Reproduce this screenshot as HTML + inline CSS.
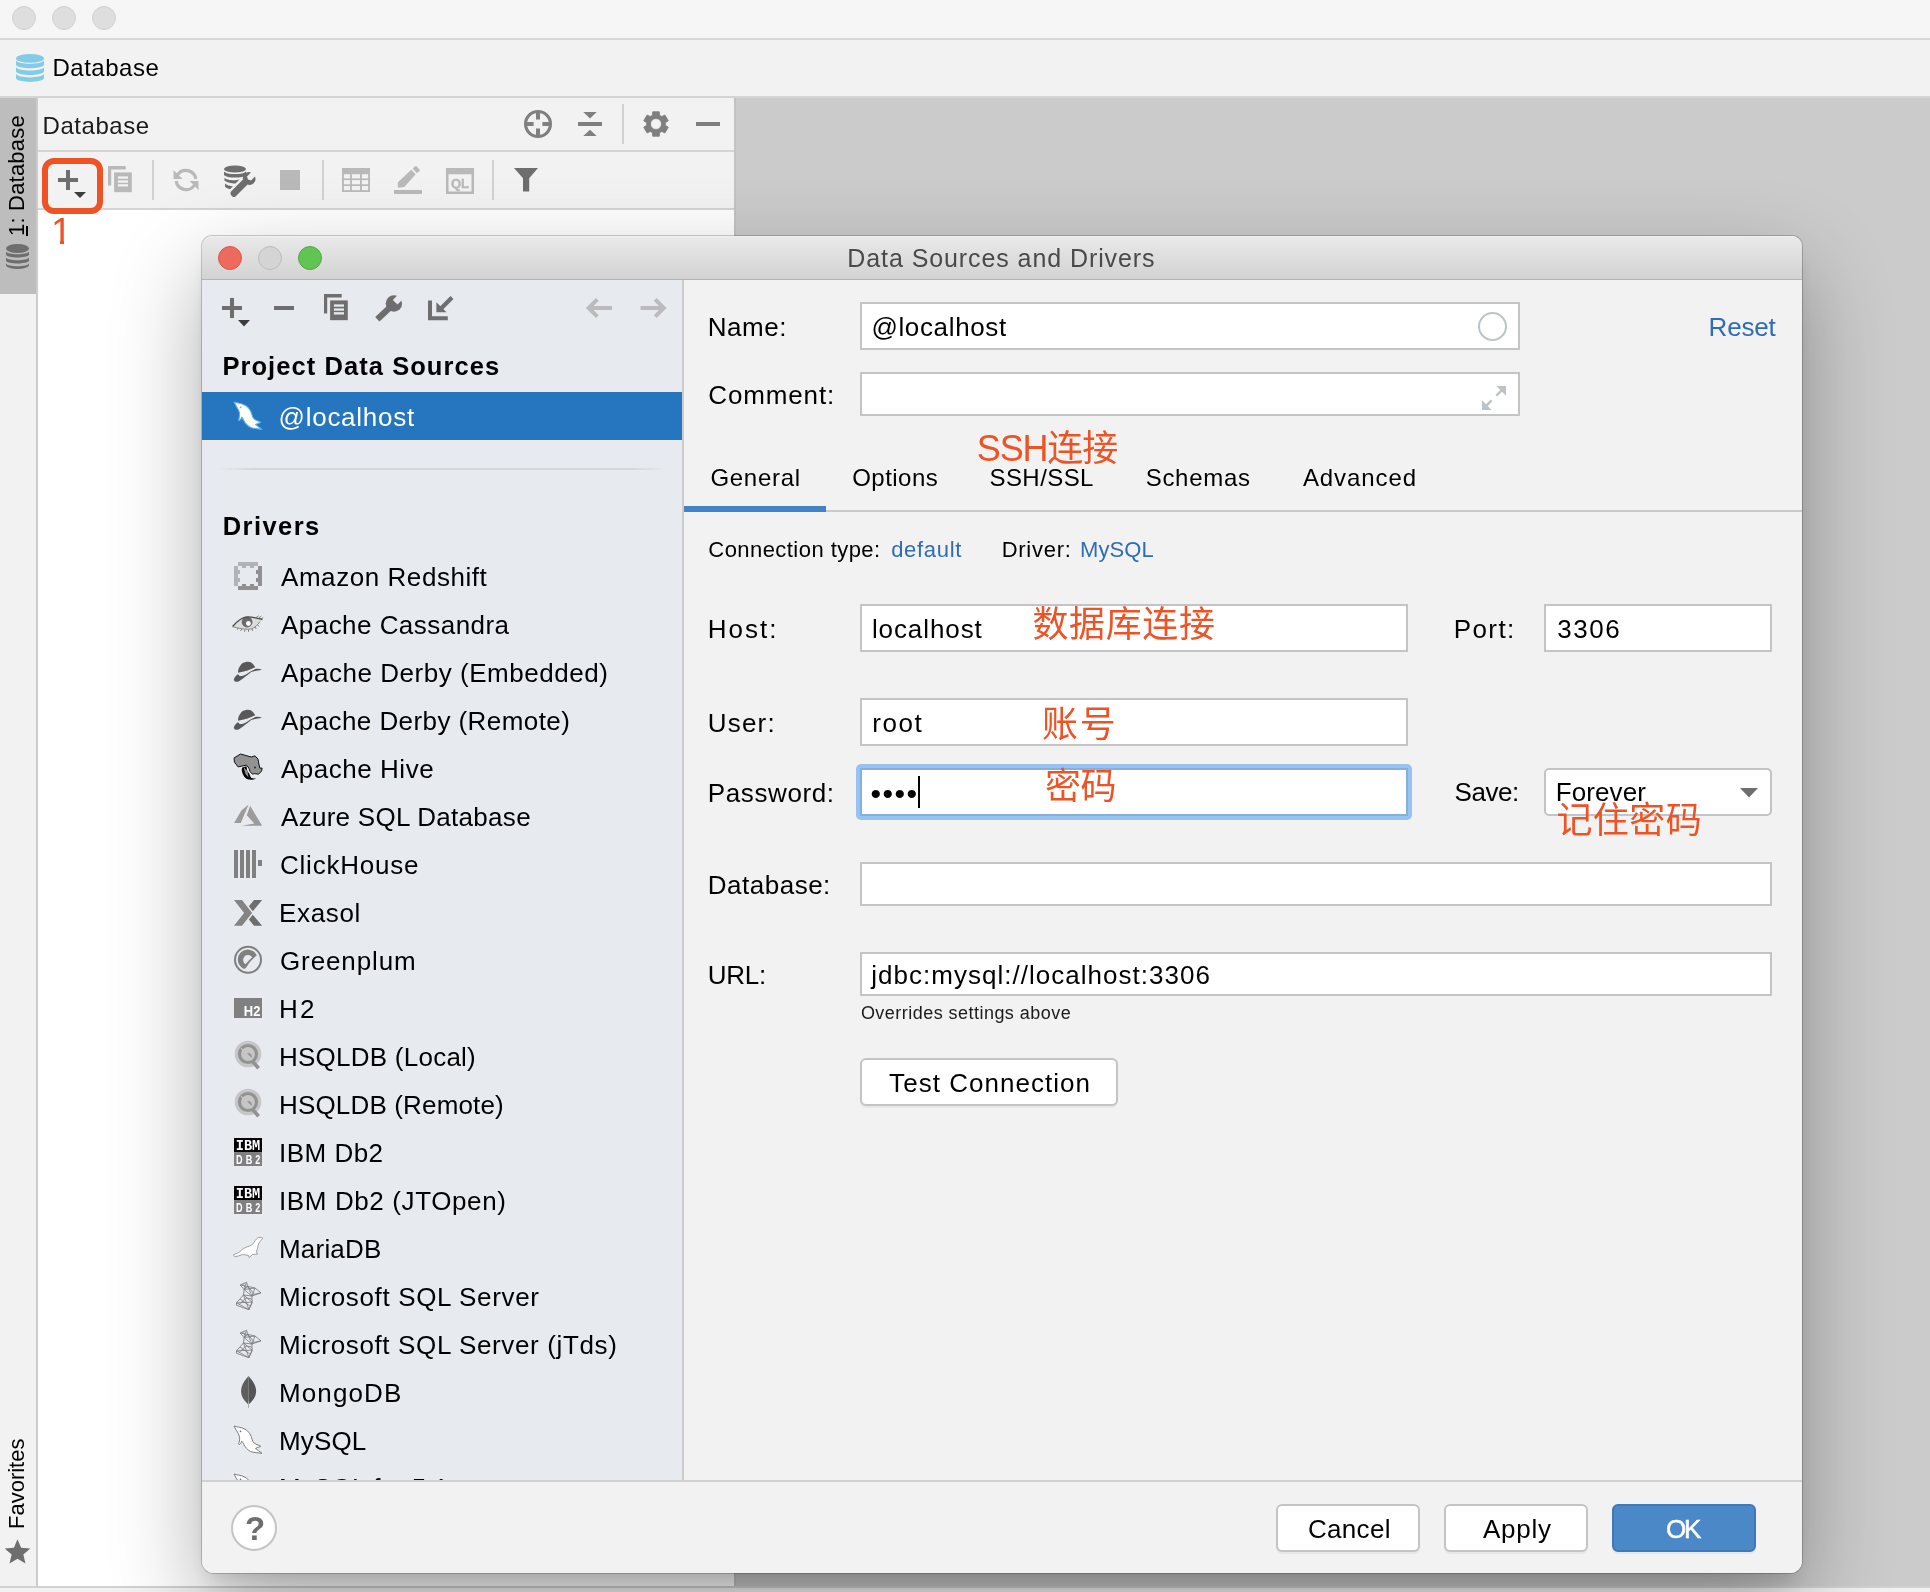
<!DOCTYPE html>
<html lang="zh">
<head>
<meta charset="utf-8">
<title>Data Sources and Drivers</title>
<style>
*{box-sizing:border-box;margin:0;padding:0}
html,body{width:1930px;height:1592px;overflow:hidden}
body{position:relative;background:#cbcbcb;font-family:"Liberation Sans","Noto Sans CJK SC",sans-serif;color:#000;font-size:26px;line-height:1}
#root{position:absolute;left:0;top:0;width:1930px;height:1592px;will-change:transform}
.a{position:absolute}
.t{position:absolute;white-space:pre;line-height:1;display:block}
svg{position:absolute;overflow:visible}
/* main window */
#titlebar{left:0;top:0;width:1930px;height:40px;background:#f6f6f6;border-bottom:2px solid #d7d7d7}
#titlebar i{position:absolute;top:6px;width:24px;height:24px;border-radius:50%;background:#dedede;border:1px solid #d2d2d2}
#navbar{left:0;top:40px;width:1930px;height:58px;background:#f2f2f2;border-bottom:2px solid #d4d4d4}
#stripe{left:0;top:98px;width:38px;height:1488px;background:#f2f2f2;border-right:2px solid #cbcbcb}
#stripebtn{left:0;top:98px;width:36px;height:196px;background:#bdbdbd}
#tw{left:38px;top:98px;width:696px;height:1488px;background:#fff}
#twhead{left:38px;top:98px;width:696px;height:54px;background:#f2f2f2;border-bottom:2px solid #d4d4d4}
#twbar{left:38px;top:152px;width:696px;height:58px;background:#f2f2f2;border-bottom:2px solid #d4d4d4}
#status{left:0;top:1586px;width:1930px;height:6px;background:#f2f2f2;border-top:2px solid #d1d1d1}
.vsep{position:absolute;width:2px;background:#d1d1d1}
/* dialog */
#dlg{left:202px;top:236px;width:1600px;height:1337px;border-radius:10px 10px 12px 12px;background:#f2f2f2;
  box-shadow:0 0 0 1px rgba(0,0,0,.2),0 36px 90px 0 rgba(0,0,0,.32),0 14px 20px -6px rgba(0,0,0,.12);overflow:hidden}
#dtitle{left:0;top:0;width:1600px;height:44px;background:linear-gradient(#f1f1f1 0,#e8e8e8 2px,#d3d3d3 100%);border-bottom:1px solid #b4b4b4}
#dtitle i{position:absolute;top:10px;width:24px;height:24px;border-radius:50%}
#side{left:0;top:44px;width:482px;height:1201px;background:#e7ebf0;border-right:2px solid #cdcdcd;overflow:hidden}
#sel{left:0;top:112px;width:480px;height:48px;background:#2675bf}
#foot{left:0;top:1244px;width:1600px;height:93px;border-top:2px solid #d1d1d1;background:#f2f2f2}
.inp{position:absolute;background:#fff;border:2px solid #c4c4c4}
.btn{position:absolute;background:#fff;border:2px solid #c4c4c4;border-radius:6px;box-shadow:0 2px 0 rgba(0,0,0,.045)}
</style>
</head>
<body>
<div id="root">
<!-- ===== main window chrome ===== -->
<div id="titlebar" class="a"><i style="left:12px"></i><i style="left:52px"></i><i style="left:92px"></i></div>
<div id="navbar" class="a"></div>
<div id="stripe" class="a"></div>
<div id="stripebtn" class="a"></div>
<div id="tw" class="a"></div>
<div id="twhead" class="a"></div>
<div id="twbar" class="a"></div>
<div class="a" style="left:734px;top:98px;width:2px;height:1488px;background:#c3c3c3"></div>
<div id="status" class="a"></div>
<!-- nav bar -->
<svg style="left:16px;top:54px" width="28" height="28" viewBox="0 0 28 28"><g fill="#84cbe8"><ellipse cx="14" cy="4.400" rx="14" ry="4.400"/><path d="M0 6.5C3 10.9 25 10.9 28 6.5v4.500C25 15.4 3 15.4 0 11.0z"/><path d="M0 13.3C3 17.7 25 17.7 28 13.3v4.500C25 22.2 3 22.2 0 17.8z"/><path d="M0 20.1C3 24.5 25 24.5 28 20.1v4.500C25 29.0 3 29.0 0 24.6z"/></g></svg>
<span class="t" style="left:52.40px;top:55.88px;font-size:24px;letter-spacing:0.530px;">Database</span>
<!-- left stripe -->
<span class="t" style="left:5.88px;top:236.40px;font-size:22px;transform-origin:0 0;transform:rotate(-90deg);letter-spacing:0.200px;">1: Database</span>
<div class="a" style="left:26px;top:226px;width:2px;height:10px;background:#000"></div>
<svg style="left:5.500px;top:244px" width="23" height="25" viewBox="0 0 23 25">
  <g fill="#6e6e6e"><ellipse cx="11.500" cy="4.500" rx="11.500" ry="4.500"/>
  <path d="M0 7.500c2 3.600 21 3.600 23 0v3.200c-2 3.600-21 3.600-23 0z"/>
  <path d="M0 13.500c2 3.600 21 3.600 23 0v3.200c-2 3.600-21 3.600-23 0z"/>
  <path d="M0 19.500c2 3.600 21 3.600 23 0v2c-2 4.600-21 4.600-23 0z"/></g>
</svg>
<span class="t" style="left:6.48px;top:1529.40px;font-size:22px;transform-origin:0 0;transform:rotate(-90deg);">Favorites</span>
<svg style="left:3.600px;top:1537.600px" width="27" height="27" viewBox="0 0 24 24"><path fill="#6e6e6e" d="M12 1l3.200 7.600 8.200.700-6.200 5.400 1.900 8-7.100-4.300-7.100 4.300 1.900-8L.600 9.300l8.200-.700z"/></svg>
<!-- tool window header -->
<span class="t" style="left:42.60px;top:113.68px;font-size:24px;letter-spacing:0.530px;color:#1a1a1a">Database</span>
<svg style="left:524px;top:110px" width="28" height="28" viewBox="0 0 28 28"><circle cx="14" cy="14" r="12.450" fill="none" stroke="#7f7f7f" stroke-width="3.100"/><path d="M14 2v7.600M14 18.400V26M2 14h7.600M18.400 14H26" stroke="#7f7f7f" stroke-width="4" fill="none"/></svg>
<svg style="left:578px;top:112px" width="24" height="24" viewBox="0 0 24 24"><g fill="#7f7f7f"><rect x="0" y="10" width="24" height="4"/><path d="M5.300 0h13.400l-6.700 6.500zM5.300 24h13.400l-6.700-6.300z"/></g></svg>
<div class="vsep" style="left:622px;top:104px;height:40px"></div>
<svg style="left:641.800px;top:110px" width="28" height="28" viewBox="-14 -14 28 28"><path fill="#7f7f7f" fill-rule="evenodd" stroke="#7f7f7f" stroke-width=".800" stroke-linejoin="round" d="M3.67 -8.65L3.29 -12.27L-3.29 -12.27L-3.67 -8.65L-5.66 -7.51L-8.98 -8.98L-12.27 -3.29L-9.33 -1.15L-9.33 1.15L-12.27 3.29L-8.98 8.98L-5.66 7.51L-3.67 8.65L-3.29 12.27L3.29 12.27L3.67 8.65L5.66 7.51L8.98 8.98L12.27 3.29L9.33 1.15L9.33 -1.15L12.27 -3.29L8.98 -8.98L5.66 -7.51ZM5.5 0A5.5 5.5 0 1 0 -5.5 0A5.5 5.5 0 1 0 5.5 0Z"/></svg>
<div class="a" style="left:696px;top:122px;width:24px;height:4px;background:#7f7f7f"></div>
<!-- tool window toolbar -->
<div class="a" style="left:58px;top:177.900px;width:20px;height:4.400px;background:#6e6e6e"></div>
<div class="a" style="left:65.800px;top:170px;width:4.400px;height:20px;background:#6e6e6e"></div>
<svg style="left:74px;top:192px" width="12" height="6" viewBox="0 0 12 6"><path fill="#3c3c3c" d="M0 0h12l-6 6z"/></svg>
<div class="a" style="left:42px;top:158px;width:61px;height:56px;border:6px solid #ee5325;border-radius:12px"></div>
<span class="t" style="left:51.00px;top:213.17px;font-size:37.6px;color:#ee5325">1</span>
<div class="a" style="left:50px;top:241.200px;width:10.100px;height:5px;background:#fff"></div><div class="a" style="left:64.300px;top:241.200px;width:8px;height:5px;background:#fff"></div>
<svg style="left:108.100px;top:166px" width="23.800" height="26.200" viewBox="0 0 23.800 26.200"><g fill="#b9b9b9"><path d="M0 0h17.700v3.400H3.200v16.200H0z"/><path d="M6.100 6.400h17.700v19.800H6.100z"/></g><g fill="#f2f2f2"><rect x="9.900" y="10.400" width="10.100" height="2.300"/><rect x="9.900" y="14.400" width="10.100" height="2.300"/><rect x="9.900" y="18.200" width="10.100" height="2.300"/></g></svg>
<div class="vsep" style="left:152px;top:160px;height:40px"></div>
<svg style="left:173.100px;top:167px" width="26" height="26" viewBox="0 0 26 26"><g transform="translate(26,0) scale(-1,1)"><g fill="none" stroke="#b9b9b9" stroke-width="3.200"><path d="M21.500 8A10 10 0 0 0 3.200 12"/><path d="M4.500 18A10 10 0 0 0 22.800 14"/></g><g fill="#b9b9b9"><path d="M25.500 3v9h-9z"/><path d="M.500 23v-9h9z"/></g></g></svg>
<svg style="left:222.500px;top:165px" width="32" height="30" viewBox="0 0 32 30"><g fill="#6e6e6e"><ellipse cx="12" cy="4" rx="11" ry="3.600"/><path d="M1 6.500c2 3.400 20 3.400 22 0v3.500c-2 3.400-20 3.400-22 0z"/><path d="M1.500 12.500c2 3 11 3.400 15 2l-4 4c-4 0-9-1-11-3z"/><path d="M2 18.500c2 2 5 2.600 8 2.800l-3 3c-2-.500-4-1.300-5-2.800z"/><path d="M8 26.500l12-12a6 6 0 0 1 8-7l-4 4 1 3 3 1 4-4a6 6 0 0 1-7.500 8l-12 12c-2 2-6.500-2-4.500-5z"/></g></svg>
<div class="a" style="left:280px;top:170px;width:20px;height:20px;background:#b9b9b9"></div>
<div class="vsep" style="left:322px;top:160px;height:40px"></div>
<svg style="left:342px;top:168px" width="28" height="24" viewBox="0 0 28 24"><rect width="28" height="24" fill="#b9b9b9"/><g fill="#f2f2f2"><rect x="1.9" y="6.2" width="6.2" height="4.200"/><rect x="9.9" y="6.2" width="8.1" height="4.200"/><rect x="19.9" y="6.2" width="6.2" height="4.200"/><rect x="1.9" y="12.1" width="6.2" height="4.200"/><rect x="9.9" y="12.1" width="8.1" height="4.200"/><rect x="19.9" y="12.1" width="6.2" height="4.200"/><rect x="1.9" y="18" width="6.2" height="4.200"/><rect x="9.9" y="18" width="8.1" height="4.200"/><rect x="19.9" y="18" width="6.2" height="4.200"/></g></svg>
<svg style="left:394px;top:166px" width="28" height="28" viewBox="0 0 28 28"><g fill="#b9b9b9"><rect x="0" y="24" width="28" height="4"/><path d="M3.900 16.200L17.300 3.800L21.700 8.300L10.300 21.100L3.900 21.800z"/><path d="M18.600 2.600L21.300 .300C21.800 -.100 22.300 0 22.700 .400L25.600 3.400C26 3.900 26 4.400 25.600 4.800L23 7.200z"/></g></svg>
<svg style="left:446px;top:168px" width="28" height="26" viewBox="0 0 28 26"><path fill="#b9b9b9" fill-rule="evenodd" d="M0 0h28v26H0zM2.500 6.200v17.300h23V6.200z"/><text x="14" y="20.200" font-family="Liberation Sans,sans-serif" font-size="13" font-weight="700" fill="#b9b9b9" stroke="#b9b9b9" stroke-width=".400" text-anchor="middle" textLength="18.200" lengthAdjust="spacingAndGlyphs">QL</text></svg>
<div class="vsep" style="left:492px;top:160px;height:40px"></div>
<svg style="left:514px;top:168.300px" width="24" height="23.600" viewBox="0 0 24 23.600"><path fill="#6e6e6e" d="M0 0h24L15.200 10.200v13.400H9V10.200z"/></svg>

<!-- ===== dialog ===== -->
<div id="dlg" class="a">
  <div id="dtitle" class="a">
    <i style="left:16px;background:#ed6a5e;border:1px solid #d8574b"></i>
    <i style="left:56px;background:#d4d4d4;border:1px solid #bcbcbc"></i>
    <i style="left:96px;background:#61c554;border:1px solid #52a842"></i>
  </div>
  <div id="side" class="a"><div id="sel" class="a"></div>
  <!--SIDE-->
  </div>
  <!--FORM-->
  <div id="foot" class="a"></div>
  <!--FOOT-->
</div>
<!-- sidebar (page coords) -->
<div class="a" style="left:222px;top:305.800px;width:20px;height:4.400px;background:#6e6e6e"></div>
<div class="a" style="left:229.800px;top:298px;width:4.400px;height:20px;background:#6e6e6e"></div>
<svg style="left:238px;top:319.500px" width="12" height="7" viewBox="0 0 12 7"><path fill="#3c3c3c" d="M0 0h12l-6 6.500z"/></svg>
<div class="a" style="left:274px;top:305.800px;width:20px;height:4.400px;background:#6e6e6e"></div>
<svg style="left:324.100px;top:293.800px" width="23.800" height="26.200" viewBox="0 0 23.800 26.200"><g fill="#6e6e6e"><path d="M0 0h17.700v3.400H3.200v16.200H0z"/><path d="M6.100 6.400h17.700v19.800H6.100z"/></g><g fill="#e7ebf0"><rect x="9.900" y="10.400" width="10.100" height="2.300"/><rect x="9.900" y="14.400" width="10.100" height="2.300"/><rect x="9.900" y="18.200" width="10.100" height="2.300"/></g></svg>
<svg style="left:374px;top:293px" width="30" height="30" viewBox="0 0 30 30"><circle cx="19.900" cy="10.500" r="8.200" fill="#6e6e6e"/><rect x="1.800" y="-3.300" width="10" height="6.600" transform="translate(19.900,10.500) rotate(-45)" fill="#e7ebf0"/><path d="M16.500 13.900L3.300 26.300" stroke="#6e6e6e" stroke-width="6.200"/></svg>
<svg style="left:428px;top:296.800px" width="25" height="23.500" viewBox="0 0 25 23.500"><g fill="#6e6e6e"><path d="M0 3.400h4v15.800H19.800v4H0z"/><path d="M8.400 5.200V15.300H18.500z"/></g><path d="M24 .500L13.500 11" stroke="#6e6e6e" stroke-width="4.300"/></svg>
<svg style="left:585px;top:297px" width="27" height="22" viewBox="0 0 27 22"><path fill="none" stroke="#bbb" stroke-width="4" d="M12.300 2.400L3.700 11l8.600 8.600M4.500 11H27"/></svg>
<svg style="left:639.500px;top:297px" width="27" height="22" viewBox="0 0 27 22"><path fill="none" stroke="#bbb" stroke-width="4" d="M15.200 2.400l8.600 8.600-8.600 8.600M23 11H.600"/></svg>
<span class="t" style="left:222.40px;top:354.01px;font-size:25.5px;letter-spacing:1.066px;font-weight:700">Project Data Sources</span>
<span class="t" style="left:278.60px;top:403.99px;font-size:26px;letter-spacing:0.724px;color:#fff">@localhost</span>
<div class="a" style="left:218px;top:468px;width:448px;height:2px;background:linear-gradient(90deg,rgba(208,212,216,0),#d3d7db 8%,#d3d7db 92%,rgba(208,212,216,0))"></div>
<span class="t" style="left:222.70px;top:514.21px;font-size:25.5px;letter-spacing:1.448px;font-weight:700">Drivers</span>
<span class="t" style="left:281.00px;top:563.69px;font-size:26px;letter-spacing:0.560px;">Amazon Redshift</span>
<span class="t" style="left:281.00px;top:611.69px;font-size:26px;letter-spacing:0.461px;">Apache Cassandra</span>
<span class="t" style="left:281.00px;top:659.69px;font-size:26px;letter-spacing:0.541px;">Apache Derby (Embedded)</span>
<span class="t" style="left:281.00px;top:707.69px;font-size:26px;letter-spacing:0.426px;">Apache Derby (Remote)</span>
<span class="t" style="left:281.00px;top:755.69px;font-size:26px;letter-spacing:0.524px;">Apache Hive</span>
<span class="t" style="left:281.00px;top:803.69px;font-size:26px;letter-spacing:0.286px;">Azure SQL Database</span>
<span class="t" style="left:280.00px;top:851.69px;font-size:26px;letter-spacing:0.786px;">ClickHouse</span>
<span class="t" style="left:279.00px;top:899.69px;font-size:26px;letter-spacing:0.668px;">Exasol</span>
<span class="t" style="left:280.00px;top:947.69px;font-size:26px;letter-spacing:0.880px;">Greenplum</span>
<span class="t" style="left:279.00px;top:995.69px;font-size:26px;letter-spacing:2.224px;">H2</span>
<span class="t" style="left:279.00px;top:1043.69px;font-size:26px;letter-spacing:0.242px;">HSQLDB (Local)</span>
<span class="t" style="left:279.00px;top:1091.69px;font-size:26px;letter-spacing:0.161px;">HSQLDB (Remote)</span>
<span class="t" style="left:279.00px;top:1139.69px;font-size:26px;letter-spacing:0.486px;">IBM Db2</span>
<span class="t" style="left:279.00px;top:1187.69px;font-size:26px;letter-spacing:0.611px;">IBM Db2 (JTOpen)</span>
<span class="t" style="left:279.00px;top:1235.69px;font-size:26px;letter-spacing:0.202px;">MariaDB</span>
<span class="t" style="left:279.00px;top:1283.69px;font-size:26px;letter-spacing:0.650px;">Microsoft SQL Server</span>
<span class="t" style="left:279.00px;top:1331.69px;font-size:26px;letter-spacing:0.638px;">Microsoft SQL Server (jTds)</span>
<span class="t" style="left:279.00px;top:1379.69px;font-size:26px;letter-spacing:1.121px;">MongoDB</span>
<span class="t" style="left:279.00px;top:1427.69px;font-size:26px;letter-spacing:0.144px;">MySQL</span>
<div class="a" style="left:202px;top:1460px;width:480px;height:20px;overflow:hidden"><span class="t" style="left:77.00px;top:14.69px;font-size:26px;letter-spacing:0.212px;">MySQL for 5.1</span></div>
<!-- driver icons -->
<svg style="left:226px;top:392px" width="48" height="48" viewBox="0 0 48 48"><g transform="translate(0,2)"><path d="M8 8.100C12 9 15 9.500 16.900 10.300C19.500 11.300 21.500 12.500 22.900 14.500C24.300 16.300 25 17.800 25.600 19.600C26.100 21.200 26.400 22.700 27.100 23.800C27.900 25 28.900 25.700 30.100 26.200C31.600 26.900 33.300 27.500 34.700 28.300L29.500 30.400C31.500 32.200 34 33.700 35.900 35.300C32 34.700 27.500 34.800 24.700 33.500C22.300 32.300 20.700 30.700 19.300 28.900C18.300 27.600 17.600 26.100 16.900 24.700L15.700 23.200C15.300 24.800 14.300 26.200 13 26.500C12.300 26 12.700 25.200 13 24.700C13.600 22.500 13.900 20.300 13.300 18.100C12.700 16 11.600 14.300 10.600 12.700C9.700 11.200 8.800 9.600 8 8.100Z" fill="#fff" stroke="#5ab0ea" stroke-width="1.1" stroke-linejoin="round"/><circle cx="14.500" cy="13.400" r=".800" fill="#5ab0ea"/></g></svg>
<svg style="left:226px;top:552px" width="48" height="48" viewBox="0 0 48 48"><g transform="translate(8,10)"><g fill="#b1b3b5"><rect x="4" width="20" height="4"/><rect x="8" y="4" width="4" height="2"/><rect x="16" y="4" width="4" height="2"/><rect y="4" width="4" height="20"/><rect x="4" y="8" width="2" height="4"/><rect x="4" y="16" width="2" height="4"/></g><g fill="#909090"><rect x="24" y="4" width="4" height="20"/><rect x="22" y="8" width="2" height="4"/><rect x="22" y="16" width="2" height="4"/><rect x="4" y="24" width="20" height="4"/><rect x="8" y="22" width="4" height="2"/><rect x="16" y="22" width="4" height="2"/></g></g></svg>
<svg style="left:226px;top:600px" width="48" height="48" viewBox="0 0 48 48"><path d="M6.600 26.500C12 20 18 16.800 22.300 16.800C28 16.800 32 18.500 35.600 20.200C32 25 27 28.900 22.300 28.900C17 28.900 11 27.500 6.600 26.500Z" fill="#dcdcdc"/><circle cx="21.100" cy="22" r="5.400" fill="#6a6a6a"/><circle cx="22.400" cy="23.500" r="2.400" fill="#fff"/><path d="M6.600 26.500C12 20 18 16.800 22.300 16.800C28 16.800 32 18.500 36.500 19.500" fill="none" stroke="#4a4a4a" stroke-width="1.300"/><path d="M6.600 26.800C12 28 17 29.300 22.300 29.300C27 29.300 31.500 25.500 34 21.500M30 17.600l2.500-1.800M32.300 18.400l3-2.400M34 19.200l3.200-1.600M12 28.200l-.800 1.600M15.500 29l-.800 2M19 29.500l-.500 2.300M22.500 29.500v2.400M26 28.800l.800 2.200M29 27l1.200 2M31.500 24.800l1.500 1.600" fill="none" stroke="#6a6a6a" stroke-width=".800"/></svg>
<svg style="left:226px;top:648px" width="48" height="48" viewBox="0 0 48 48"><g fill="#595959"><path d="M12.100 24.700C12 22 12.400 19.900 15.700 15.700C18 14.300 21 13.700 22.900 13.900C25 14 27 15 29.300 19.300C24 22 18 23.900 12.100 24.700Z"/><path d="M36.100 21.400C33 20.500 31 20.700 29.300 21C26 22.500 23 24.600 19.900 26.500C17 27.800 15 28.300 13.900 28C13 27.500 12.500 26.600 12.100 25.900C10 27.500 8.500 29 7.800 31.400C8 33.500 10 34.200 12.500 33.500C16 32 20 28 25.300 24.100C29 22.500 33 23 36.100 21.400Z"/></g></svg>
<svg style="left:226px;top:696px" width="48" height="48" viewBox="0 0 48 48"><g fill="#595959"><path d="M12.100 24.700C12 22 12.400 19.900 15.700 15.700C18 14.300 21 13.700 22.900 13.900C25 14 27 15 29.300 19.300C24 22 18 23.900 12.100 24.700Z"/><path d="M36.100 21.400C33 20.500 31 20.700 29.300 21C26 22.500 23 24.600 19.900 26.500C17 27.800 15 28.300 13.900 28C13 27.500 12.500 26.600 12.100 25.900C10 27.500 8.500 29 7.800 31.400C8 33.500 10 34.200 12.500 33.500C16 32 20 28 25.300 24.100C29 22.500 33 23 36.100 21.400Z"/></g></svg>
<svg style="left:226px;top:744px" width="48" height="48" viewBox="0 0 48 48"><path d="M8.100 13.900L14.500 10L19.900 11.500L25.300 13L29 11.800L32 15.100L32.900 19.900L33.800 24.100L36.100 24.100L35.600 27.100L32.600 30.200L28.300 29.600L26.500 30.200L24.100 27.700L22.900 24.100L20.500 21.100L12.100 22.900L8.400 18.100Z" fill="#929292" stroke="#111" stroke-width="1" stroke-linejoin="round"/><path d="M16.300 23.500C15.200 26 15.700 28.300 18.100 32.600C19.500 34.500 21.500 35.600 22.900 35.600C26 35.900 28.500 35.200 30.200 34.400C28 34.500 26.500 34.500 25.300 34.100C24.500 33 24 31.500 23.500 30.200L21.100 26.500L20.500 22.300Z" fill="#000"/><path d="M17.500 23L19.500 30L22.500 33.500L21.500 27Z" fill="#929292"/><circle cx="29" cy="23.500" r=".900" fill="#222"/></svg>
<svg style="left:226px;top:792px" width="48" height="48" viewBox="0 0 48 48"><g fill="#9b9b9b"><path d="M22.600 12.600L15.400 18.600L8.100 31H14.800Z"/><path d="M24.100 13.800L36.100 33.700H15.700L28.300 31.600L20.800 23.200Z"/></g></svg>
<svg style="left:226px;top:840px" width="48" height="48" viewBox="0 0 48 48"><g fill="#808080"><rect x="8" y="10" width="4" height="28"/><rect x="14" y="10" width="4" height="28"/><rect x="20" y="10" width="4" height="28"/><rect x="26" y="10" width="4" height="28"/><rect x="32" y="20" width="4" height="6"/></g></svg>
<svg style="left:226px;top:888px" width="48" height="48" viewBox="0 0 48 48"><path d="M8 12H16L26.100 25L16 37.800H8L18.100 25Z" fill="#848484"/><g fill="#6e6e6e"><path d="M28 12H36.100L26.800 23.200L22.900 18.300Z"/><path d="M26.800 26.800L36.100 37.800H28L22.900 31.600Z"/></g></svg>
<svg style="left:226px;top:936px" width="48" height="48" viewBox="0 0 48 48"><circle cx="22" cy="23.800" r="13" fill="none" stroke="#808080" stroke-width="2"/><path fill="#808080" fill-rule="evenodd" d="M30.800 19.300A10 10 0 1 0 18.100 32.900C20 32.500 21 30.500 22.300 28.300C24 25.500 27.500 22.500 30.800 19.300ZM26.200 21.400A4.900 4.900 0 1 0 19.600 28.200C21.500 25.500 23.500 23.500 26.200 21.400Z"/></svg>
<svg style="left:226px;top:984px" width="48" height="48" viewBox="0 0 48 48"><rect x="8" y="14" width="28" height="20" fill="#808080"/><text x="26.100" y="32.200" text-anchor="middle" font-family="Liberation Sans,sans-serif" font-weight="700" font-size="15.500" fill="#fff" textLength="16.600" lengthAdjust="spacingAndGlyphs">H2</text></svg>
<svg style="left:226px;top:1032px" width="48" height="48" viewBox="0 0 48 48"><circle cx="22" cy="22" r="13.300" fill="#c6c6c6"/><circle cx="22" cy="22" r="8.500" fill="none" stroke="#929292" stroke-width="3.200"/><path d="M21 21.200L25.700 26V23.500A4.200 4.200 0 0 0 21 21.200Z" fill="#929292"/><path d="M26.300 29.300L32.600 36.200" stroke="#929292" stroke-width="3.600"/><path d="M15 16.200L26.300 28" stroke="#c6c6c6" stroke-width="1.200"/></svg>
<svg style="left:226px;top:1080px" width="48" height="48" viewBox="0 0 48 48"><circle cx="22" cy="22" r="13.300" fill="#c6c6c6"/><circle cx="22" cy="22" r="8.500" fill="none" stroke="#929292" stroke-width="3.200"/><path d="M21 21.200L25.700 26V23.500A4.200 4.200 0 0 0 21 21.200Z" fill="#929292"/><path d="M26.300 29.300L32.600 36.200" stroke="#929292" stroke-width="3.600"/><path d="M15 16.200L26.300 28" stroke="#c6c6c6" stroke-width="1.200"/></svg>
<svg style="left:226px;top:1128px" width="48" height="48" viewBox="0 0 48 48"><rect x="8" y="10" width="28" height="14" fill="#000"/><rect x="8" y="24" width="28" height="14" fill="#808080"/><text x="22" y="22.200" text-anchor="middle" font-family="Liberation Mono,monospace" font-weight="700" font-size="14.800" fill="#fff" textLength="24.500" lengthAdjust="spacingAndGlyphs">IBM</text><text transform="translate(22.200,35.700) scale(.760,1)" text-anchor="middle" font-family="Liberation Sans,sans-serif" font-weight="700" font-size="12" fill="#fff" textLength="32" lengthAdjust="spacing">DB2</text></svg>
<svg style="left:226px;top:1176px" width="48" height="48" viewBox="0 0 48 48"><rect x="8" y="10" width="28" height="14" fill="#000"/><rect x="8" y="24" width="28" height="14" fill="#808080"/><text x="22" y="22.200" text-anchor="middle" font-family="Liberation Mono,monospace" font-weight="700" font-size="14.800" fill="#fff" textLength="24.500" lengthAdjust="spacingAndGlyphs">IBM</text><text transform="translate(22.200,35.700) scale(.760,1)" text-anchor="middle" font-family="Liberation Sans,sans-serif" font-weight="700" font-size="12" fill="#fff" textLength="32" lengthAdjust="spacing">DB2</text></svg>
<svg style="left:226px;top:1224px" width="48" height="48" viewBox="0 0 48 48"><path d="M36.600 13.900C35 13.200 33 13.200 31.600 13.900C29.500 15.500 28.500 18 27.100 19.700C25 21.500 22.500 22.500 19.900 23.300C17.500 24.300 15.500 26 13.600 27.900C11.800 29.300 9.500 29.800 7.700 30.600C7.600 31.600 8.200 32.400 9 32.800C11.500 32.500 13.800 31.300 16.300 30.600C18.500 30.500 20.600 31 22.600 31.500L23.100 33.700C24.300 32.900 25.300 31.700 26.200 30.600C28 30.300 29.800 30.100 31.600 30.100C31.300 29.300 30.800 28.600 30.300 27.900C31.200 25.800 31.800 23.700 32.100 21.500C32.500 20 33.100 18.700 33.900 17.500C35 16.500 36.200 15.300 36.600 13.900Z" fill="#fff" stroke="#8a8a8a" stroke-width=".800" stroke-linejoin="round"/></svg>
<svg style="left:226px;top:1272px" width="48" height="48" viewBox="0 0 48 48"><g fill="none" stroke="#767676" stroke-width=".800" stroke-linejoin="round"><path d="M14.200 13L20.500 10.300L22 14.500L29 16L35 20.800L28.300 22.300L25.900 24.100L26.200 30.200L22.900 37.700L10.300 33.200L10.600 30.800L17.500 22.900L18.100 17.500Z"/><path d="M14.200 13L22 14.500L18.100 17.500L25.900 24.100L17.500 22.900L26.200 30.200L10.600 30.800L22.900 37.700M20.500 10.300L18.100 17.500L29 16L25.900 24.100L35 20.800M22 14.500L25.900 24.100M17.500 22.900L22.900 37.700L26.200 30.200M14 27L24 34M13.500 32L20 26L26 27M22 14.500L28.300 22.300M16.500 11.800L20 16"/></g></svg>
<svg style="left:226px;top:1320px" width="48" height="48" viewBox="0 0 48 48"><g fill="none" stroke="#767676" stroke-width=".800" stroke-linejoin="round"><path d="M14.200 13L20.500 10.300L22 14.500L29 16L35 20.800L28.300 22.300L25.900 24.100L26.200 30.200L22.900 37.700L10.300 33.200L10.600 30.800L17.500 22.900L18.100 17.500Z"/><path d="M14.200 13L22 14.500L18.100 17.500L25.900 24.100L17.500 22.900L26.200 30.200L10.600 30.800L22.900 37.700M20.500 10.300L18.100 17.500L29 16L25.900 24.100L35 20.800M22 14.500L25.900 24.100M17.500 22.900L22.900 37.700L26.200 30.200M14 27L24 34M13.500 32L20 26L26 27M22 14.500L28.300 22.300M16.500 11.800L20 16"/></g></svg>
<svg style="left:226px;top:1368px" width="48" height="48" viewBox="0 0 48 48"><path d="M22.500 8.100C18.500 12.500 15.100 17.500 15.100 23.200C15.100 29 18.500 33 22.500 36.600Z" fill="#5e5e5e"/><path d="M22.500 8.100C26.500 12.500 30.100 17.500 30.100 23.200C30.100 29 26.500 33 22.500 36.600Z" fill="#555"/><path d="M22.500 33V39.800" stroke="#a9a9a9" stroke-width="1"/></svg>
<svg style="left:226px;top:1416px" width="48" height="48" viewBox="0 0 48 48"><g transform="translate(0,2)"><path d="M8 8.100C12 9 15 9.500 16.900 10.300C19.500 11.300 21.500 12.500 22.900 14.500C24.300 16.300 25 17.800 25.600 19.600C26.100 21.200 26.400 22.700 27.100 23.800C27.900 25 28.900 25.700 30.100 26.200C31.600 26.900 33.300 27.500 34.700 28.300L29.500 30.400C31.500 32.200 34 33.700 35.900 35.300C32 34.700 27.500 34.800 24.700 33.500C22.300 32.300 20.700 30.700 19.300 28.900C18.300 27.600 17.600 26.100 16.900 24.700L15.700 23.200C15.300 24.800 14.300 26.200 13 26.500C12.300 26 12.700 25.200 13 24.700C13.600 22.500 13.900 20.300 13.300 18.100C12.700 16 11.600 14.300 10.600 12.700C9.700 11.200 8.800 9.600 8 8.100Z" fill="#fff" stroke="#6e6e6e" stroke-width="0.9" stroke-linejoin="round"/><circle cx="14.500" cy="13.400" r=".800" fill="#6e6e6e"/></g></svg>
<div class="a" style="left:226px;top:1464px;width:48px;height:16px;overflow:hidden"><svg style="left:0px;top:0px" width="48" height="48" viewBox="0 0 48 48"><g transform="translate(0,2)"><path d="M8 8.100C12 9 15 9.500 16.900 10.300C19.500 11.300 21.500 12.500 22.900 14.500C24.300 16.300 25 17.800 25.600 19.600C26.100 21.200 26.400 22.700 27.100 23.800C27.900 25 28.900 25.700 30.100 26.200C31.600 26.900 33.300 27.500 34.700 28.300L29.500 30.400C31.500 32.200 34 33.700 35.900 35.300C32 34.700 27.500 34.800 24.700 33.500C22.300 32.300 20.700 30.700 19.300 28.900C18.300 27.600 17.600 26.100 16.900 24.700L15.700 23.200C15.300 24.800 14.300 26.200 13 26.500C12.300 26 12.700 25.200 13 24.700C13.600 22.500 13.900 20.300 13.300 18.100C12.700 16 11.600 14.300 10.600 12.700C9.700 11.200 8.800 9.600 8 8.100Z" fill="#fff" stroke="#6e6e6e" stroke-width="0.9" stroke-linejoin="round"/><circle cx="14.500" cy="13.400" r=".800" fill="#6e6e6e"/></g></svg></div>
<!-- form (page coords) -->
<span class="t" style="left:847.30px;top:246.34px;font-size:25px;letter-spacing:0.916px;color:#4a4a4a">Data Sources and Drivers</span>
<span class="t" style="left:707.80px;top:313.99px;font-size:26px;letter-spacing:0.511px;">Name:</span>
<div class="inp" style="left:860px;top:302px;width:660px;height:48px"></div>
<span class="t" style="left:871.40px;top:313.99px;font-size:26px;letter-spacing:0.646px;">@localhost</span>
<div class="a" style="left:1478px;top:312px;width:29px;height:29px;border:2px solid #bcc4c9;border-radius:50%"></div>
<span class="t" style="left:1708.60px;top:313.99px;font-size:26px;letter-spacing:-0.174px;color:#2e6db4">Reset</span>
<span class="t" style="left:708.30px;top:381.69px;font-size:26px;letter-spacing:0.858px;">Comment:</span>
<div class="inp" style="left:860px;top:372px;width:660px;height:44px"></div>
<svg style="left:1482px;top:386px" width="24" height="24" viewBox="0 0 24 24"><g fill="#bcc3c8"><path d="M14.300 0H24v9.700z"/><path d="M0 14.300V24h9.700z"/></g><path stroke="#bcc3c8" stroke-width="2.400" d="M19.800 4.200l-5.400 5.400M4.200 19.800l5.400-5.400"/></svg>
<span class="t" style="left:976.80px;top:430.83px;font-size:36px;letter-spacing:-1.155px;color:#ee5325">SSH连接</span>
<span class="t" style="left:710.40px;top:465.68px;font-size:24px;letter-spacing:0.708px;">General</span>
<span class="t" style="left:852.20px;top:465.68px;font-size:24px;letter-spacing:0.465px;">Options</span>
<span class="t" style="left:989.50px;top:465.68px;font-size:24px;letter-spacing:0.428px;">SSH/SSL</span>
<span class="t" style="left:1145.70px;top:465.68px;font-size:24px;letter-spacing:0.710px;">Schemas</span>
<span class="t" style="left:1302.90px;top:465.68px;font-size:24px;letter-spacing:0.929px;">Advanced</span>
<div class="a" style="left:684px;top:510px;width:1118px;height:2px;background:#c9c9c9"></div>
<div class="a" style="left:684px;top:506px;width:142px;height:6px;background:#4083c9"></div>
<span class="t" style="left:708.30px;top:538.88px;font-size:22px;letter-spacing:0.447px;">Connection type:</span>
<span class="t" style="left:891.20px;top:538.88px;font-size:22px;letter-spacing:0.693px;color:#2e6db4">default</span>
<span class="t" style="left:1001.70px;top:538.88px;font-size:22px;letter-spacing:0.723px;">Driver:</span>
<span class="t" style="left:1080.10px;top:538.88px;font-size:22px;letter-spacing:0.072px;color:#2e6db4">MySQL</span>
<span class="t" style="left:707.80px;top:615.99px;font-size:26px;letter-spacing:1.985px;">Host:</span>
<div class="inp" style="left:860px;top:604px;width:548px;height:48px"></div>
<span class="t" style="left:871.90px;top:616.19px;font-size:26px;letter-spacing:0.913px;">localhost</span>
<span class="t" style="left:1032.40px;top:607.03px;font-size:36px;letter-spacing:0.625px;color:#ee5325">数据库连接</span>
<span class="t" style="left:1453.80px;top:615.79px;font-size:26px;letter-spacing:1.379px;">Port:</span>
<div class="inp" style="left:1544px;top:604px;width:228px;height:48px"></div>
<span class="t" style="left:1557.30px;top:615.79px;font-size:26px;letter-spacing:1.507px;">3306</span>
<span class="t" style="left:707.80px;top:709.99px;font-size:26px;letter-spacing:1.176px;">User:</span>
<div class="inp" style="left:860px;top:698px;width:548px;height:48px"></div>
<span class="t" style="left:872.20px;top:709.99px;font-size:26px;letter-spacing:1.574px;">root</span>
<span class="t" style="left:1042.00px;top:706.53px;font-size:36px;letter-spacing:1.700px;color:#ee5325">账号</span>
<span class="t" style="left:707.80px;top:779.89px;font-size:26px;letter-spacing:0.605px;">Password:</span>
<div class="a" style="left:856px;top:764px;width:556px;height:56px;background:#97c3f3;border-radius:5px"></div>
<div class="inp" style="left:860px;top:768px;width:548px;height:48px;border-color:#87afda"></div>
<span class="t" style="left:870.40px;top:779.34px;font-size:30.2px;letter-spacing:1.431px;">••••</span>
<div class="a" style="left:918px;top:776px;width:2px;height:32px;background:#000"></div>
<span class="t" style="left:1045.00px;top:768.53px;font-size:36px;letter-spacing:-0.500px;color:#ee5325">密码</span>
<span class="t" style="left:1454.50px;top:779.49px;font-size:26px;letter-spacing:-0.440px;">Save:</span>
<div class="inp" style="left:1544px;top:768px;width:228px;height:48px;border-radius:5px"></div>
<span class="t" style="left:1555.80px;top:779.49px;font-size:26px;letter-spacing:0.080px;">Forever</span>
<svg style="left:1740px;top:788px" width="18" height="9.500" viewBox="0 0 18 9.500"><path fill="#6e6e6e" d="M0 0h18l-9 9.500z"/></svg>
<span class="t" style="left:1556.40px;top:802.73px;font-size:36px;letter-spacing:0.467px;color:#ee5325">记住密码</span>
<span class="t" style="left:707.80px;top:871.79px;font-size:26px;letter-spacing:0.500px;">Database:</span>
<div class="inp" style="left:860px;top:862px;width:912px;height:44px"></div>
<span class="t" style="left:707.80px;top:961.69px;font-size:26px;letter-spacing:-0.271px;">URL:</span>
<div class="inp" style="left:860px;top:952px;width:912px;height:44px"></div>
<span class="t" style="left:871.20px;top:961.99px;font-size:26px;letter-spacing:1.019px;">jdbc:mysql://localhost:3306</span>
<span class="t" style="left:860.90px;top:1004.36px;font-size:18px;letter-spacing:0.466px;color:#1a1a1a">Overrides settings above</span>
<div class="btn" style="left:860px;top:1058px;width:258px;height:48px"></div>
<span class="t" style="left:889.10px;top:1069.69px;font-size:26px;letter-spacing:1.037px;">Test Connection</span>
<!-- footer -->
<div class="a" style="left:231px;top:1505px;width:46px;height:46px;border-radius:50%;background:#fff;border:2px solid #c4c4c4"></div>
<span class="t" style="left:244.90px;top:1512.07px;font-size:33px;font-weight:700;color:#6e6e6e">?</span>
<div class="btn" style="left:1276px;top:1504px;width:144px;height:48px"></div>
<span class="t" style="left:1307.90px;top:1515.89px;font-size:26px;letter-spacing:0.329px;">Cancel</span>
<div class="btn" style="left:1444px;top:1504px;width:144px;height:48px"></div>
<span class="t" style="left:1483.00px;top:1515.89px;font-size:26px;letter-spacing:0.765px;">Apply</span>
<div class="btn" style="left:1612px;top:1504px;width:144px;height:48px;background:#4b88c8;border-color:#3f79b8"></div>
<span class="t" style="left:1665.90px;top:1515.89px;font-size:26px;letter-spacing:-2.024px;color:#fff;-webkit-text-stroke:.500px #fff">OK</span>

</div>
</body>
</html>
